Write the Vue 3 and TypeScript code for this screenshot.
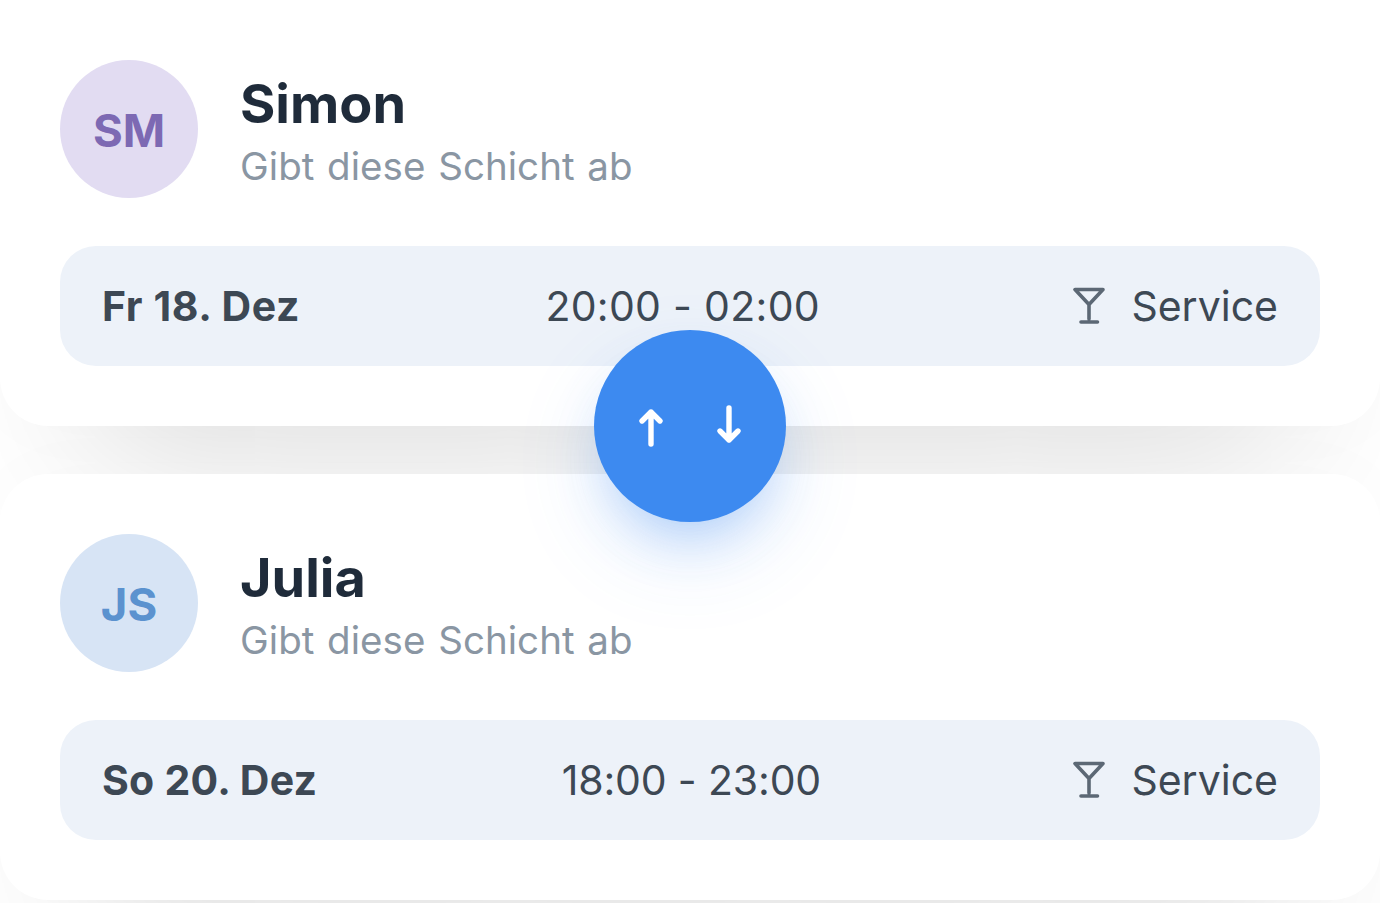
<script setup lang="ts">
interface Shift {
  initials: string
  name: string
  tone: string
  date: string
  time: string
}

const shifts: Shift[] = [
  { initials: 'SM', name: 'Simon', tone: 'violet', date: 'Fr 18. Dez', time: '20:00 - 02:00' },
  { initials: 'JS', name: 'Julia', tone: 'blue', date: 'So 20. Dez', time: '18:00 - 23:00' },
]
</script>

<template>
  <main class="swap">
    <section v-for="s in shifts" :key="s.initials" class="card">
      <header class="person">
        <div class="avatar" :class="s.tone">{{ s.initials }}</div>
        <div class="who">
          <h2 class="name">{{ s.name }}</h2>
          <p class="note">Gibt diese Schicht ab</p>
        </div>
      </header>
      <div class="shift" :class="s.tone">
        <strong class="date">{{ s.date }}</strong>
        <span class="time">{{ s.time }}</span>
        <span class="role">
          <svg class="glass" viewBox="0 0 32 38" fill="none">
            <path d="M2 2.5H30L16 17.5ZM16 17.5V32M8 35H24.5" />
          </svg>
          <span class="label">Service</span>
        </span>
      </div>
    </section>
    <button class="toggle" aria-label="Schichten tauschen">
      <svg viewBox="0 0 192 192" fill="none">
        <path d="M57 114V82M48 91L57 82L66 91M135 78V110M126 101L135 110L144 101" />
      </svg>
    </button>
  </main>
</template>

<style>
body {
  margin: 0;
  background: #fff;
  overflow: hidden;
}
</style>

<style scoped>
.swap {
  position: relative;
  display: flex;
  flex-direction: column;
  gap: 48px;
  height: 903px;
  overflow: hidden;
  font-family: Inter, "Liberation Sans", sans-serif;
}
.card {
  box-sizing: border-box;
  flex: none;
  height: 426px;
  padding: 60px;
  border-radius: 48px;
  background: #fff;
  box-shadow: 0 115px 160px -96px rgba(0, 0, 0, 0.145), 0 0 90px rgba(0, 0, 0, 0.02);
}
.card:first-child {
  border-radius: 0 0 48px 48px;
}
.person {
  display: flex;
  align-items: center;
  gap: 42px;
  height: 138px;
}
.avatar {
  display: flex;
  align-items: center;
  justify-content: center;
  box-sizing: border-box;
  width: 138px;
  height: 138px;
  padding-top: 3px;
  border-radius: 50%;
  font-size: 45.5px;
  font-weight: 700;
  line-height: 54px;
}
.avatar.violet {
  background: #e2dcf2;
  color: #7d69b3;
}
.avatar.blue {
  background: #d7e4f5;
  color: #5b92cf;
}
.who {
  padding-top: 8px;
}
.name {
  margin: 0;
  color: #1f2b3a;
  font-size: 54px;
  font-weight: 700;
  line-height: 66px;
}
.note {
  margin: 0;
  color: #8a96a3;
  font-size: 38.5px;
  line-height: 58px;
  letter-spacing: 0.05px;
  word-spacing: 1.8px;
}
.shift {
  display: flex;
  align-items: center;
  justify-content: space-between;
  box-sizing: border-box;
  height: 119.6px;
  margin-top: 48.4px;
  padding: 0 42px 0.5px;
  border-radius: 36px;
  background: #edf2f9;
  color: #3d4854;
  font-size: 41px;
  line-height: 60px;
}
.date {
  font-weight: 700;
  letter-spacing: 0.6px;
}
.time {
  margin-right: 8px;
  letter-spacing: 0.3px;
}
.blue .date {
  letter-spacing: 0.25px;
}
.blue .time {
  letter-spacing: -0.15px;
}
.role {
  display: flex;
  align-items: center;
  gap: 26px;
}
.glass {
  width: 32px;
  height: 38px;
  stroke: #5c6875;
  stroke-width: 3.6;
  stroke-linecap: round;
  stroke-linejoin: round;
}
.toggle {
  position: absolute;
  top: 330px;
  left: 594px;
  width: 192px;
  height: 192px;
  padding: 0;
  border: 0;
  border-radius: 50%;
  background: #3d8af0;
  box-shadow: 0 30px 60px -24px rgba(61, 138, 240, 0.45), 0 36px 96px -10px rgba(61, 138, 240, 0.16);
}
.toggle svg {
  display: block;
  stroke: #fff;
  stroke-width: 5.4;
  stroke-linecap: round;
  stroke-linejoin: round;
}
</style>
